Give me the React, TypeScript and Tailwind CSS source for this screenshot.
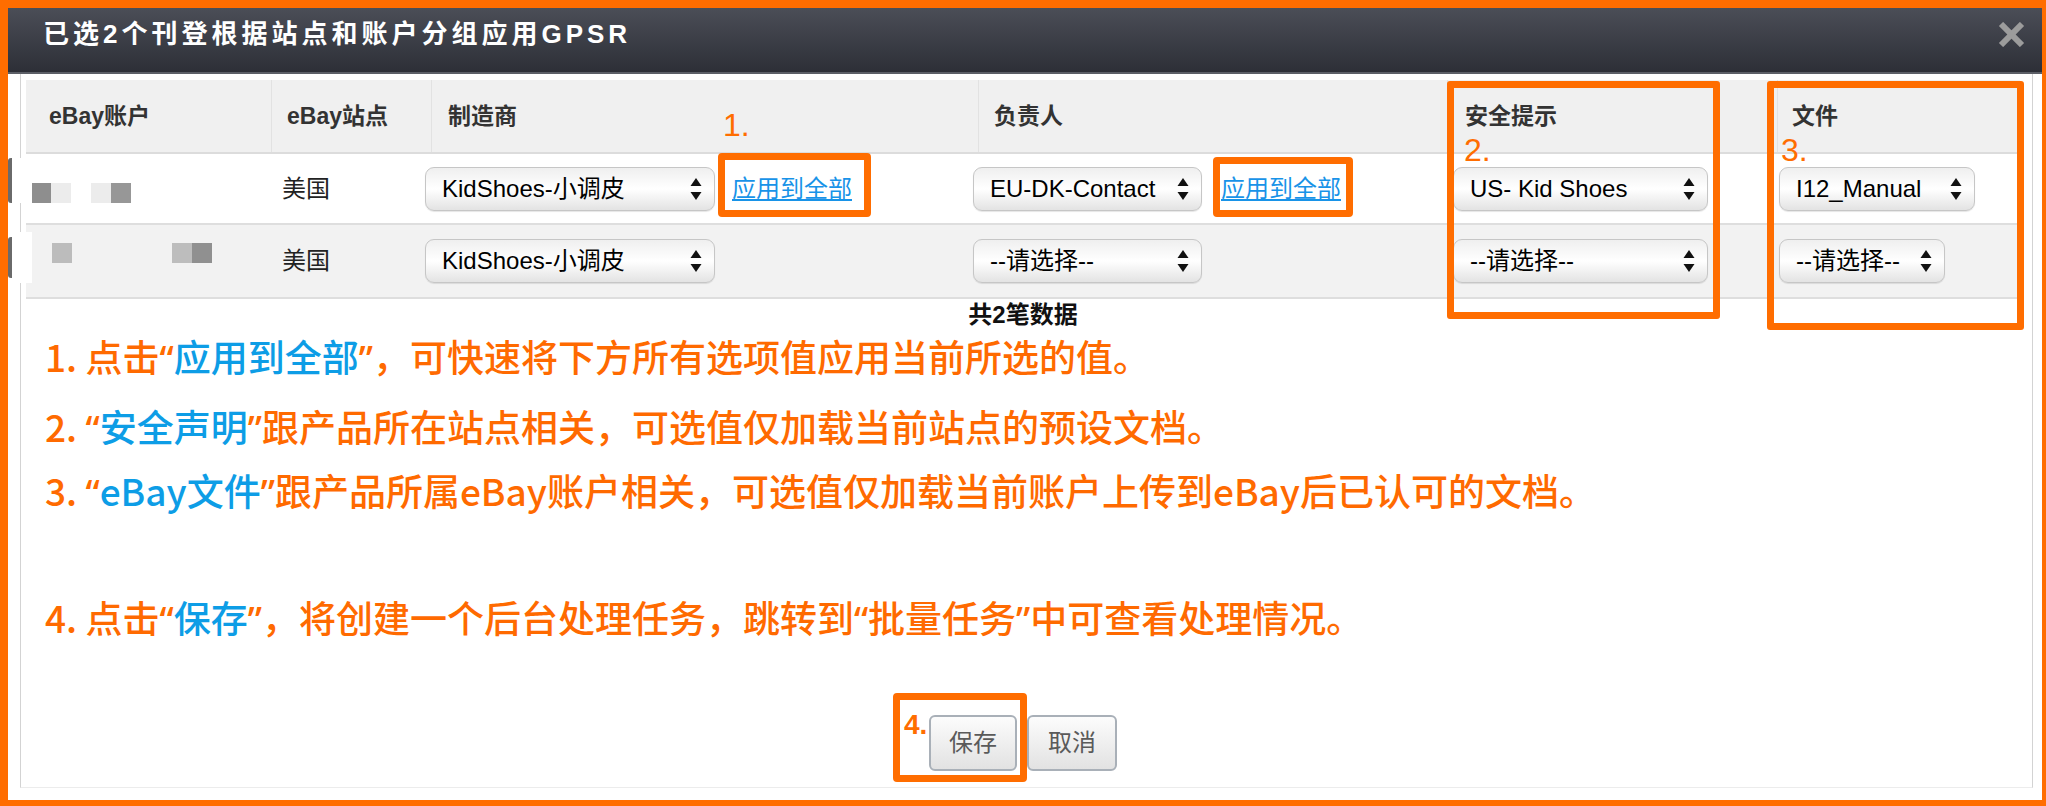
import React from "react";

const ui = "font-['Liberation_Sans','Noto_Sans_CJK_SC',sans-serif]";
const note = "font-['Noto_Sans_CJK_SC',sans-serif]";

function Arrows() {
  return (
    <svg width="12" height="22" viewBox="0 0 12 22" className="shrink-0">
      <path d="M6 0 L11.5 8 L0.5 8 Z" fill="#111" />
      <path d="M0.5 14 L11.5 14 L6 22 Z" fill="#111" />
    </svg>
  );
}

function Select({ value, className }: { value: string; className: string }) {
  return (
    <div
      className={`flex h-[44px] shrink-0 items-center justify-between rounded-[9px] border border-[#c6c6c6] bg-linear-to-b from-[#efefef] via-white to-[#e3e3e3] pl-[16px] pr-[12px] text-[24px] leading-none text-black shadow-[0_1px_1px_rgba(0,0,0,0.1)] ${className}`}
    >
      <span className="whitespace-nowrap">{value}</span>
      <Arrows />
    </div>
  );
}

function ApplyAll({ className }: { className: string }) {
  return (
    <a className={`whitespace-nowrap text-[24px] leading-[24px] text-[#1893e8] underline underline-offset-2 ${className}`}>
      应用到全部
    </a>
  );
}

// narrow latin quotes, as in the reference
function Q({ children }: { children: React.ReactNode }) {
  return <span className="font-['Noto_Sans',sans-serif]">{children}</span>;
}

function Blue({ children }: { children: React.ReactNode }) {
  return <span className="text-[#0d9de6]">{children}</span>;
}

const headCols = "grid grid-cols-[245px_160px_547px_469px_330px_243px]";
const rowCols = "grid grid-cols-[244px_145px_548px_477px_327px_253px]";

export default function App() {
  return (
    <div className={`h-[806px] w-[2046px] bg-[#ff6d00] pb-[6px] pl-[8px] pr-[4px] pt-[8px] ${ui}`}>
      <div className="relative flex h-full flex-col bg-white">
        {/* title bar */}
        <div className="flex h-[64px] items-start justify-between bg-linear-to-b from-[#4b4e57] to-[#2d2f37] pl-[35px] pr-[17px] pt-[13px]">
          <h1 className="text-[26px] font-bold leading-[26px] tracking-[4px] text-white">
            已选2个刊登根据站点和账户分组应用GPSR
          </h1>
          <svg width="27" height="25" viewBox="0 0 27 25" className="mt-[1px]">
            <path d="M3 2 L24 23 M24 2 L3 23" stroke="#9c9c9c" strokeWidth="6" />
          </svg>
        </div>
        <div className="h-[2px] bg-[#5c5f67]" />

        {/* body */}
        <div className="mb-[12px] ml-[12px] mr-[9px] flex flex-1 flex-col border-x border-b border-x-[#d3d3d3] border-b-[#ececec] pb-[16px] pl-[5px] pr-[12px] pt-[6px]">
          {/* header */}
          <div className={`${headCols} h-[74px] border-b-2 border-[#dcdcdc] bg-[#f0f0f0] text-[23px] font-bold text-[#333]`}>
            <div className="flex items-center pl-[23px]">eBay账户</div>
            <div className="flex items-center border-l border-[#e2e2e2] pl-[15px]">eBay站点</div>
            <div className="flex items-center border-l border-[#e2e2e2] pl-[16px]">制造商</div>
            <div className="flex items-center border-l border-[#e2e2e2] pl-[15px]">负责人</div>
            <div className="flex items-center border-l border-[#e2e2e2] pl-[17px]">安全提示</div>
            <div className="flex items-center border-l border-[#e2e2e2] pl-[14px]">文件</div>
          </div>

          {/* row 1 */}
          <div className={`${rowCols} h-[71px] items-center border-b-2 border-[#dedede] bg-white text-[24px] text-[#222]`}>
            <div className="mt-[9px] flex pl-[5px]">
              <div className="h-[20px] w-[20px] bg-[#8e8e8e]" />
              <div className="h-[20px] w-[20px] bg-[#ececec]" />
              <div className="ml-[20px] h-[20px] w-[20px] bg-[#ececec]" />
              <div className="h-[20px] w-[20px] bg-[#979797]" />
            </div>
            <div className="pl-[12px]">美国</div>
            <div className="flex items-center pl-[10px]">
              <Select value="KidShoes-小调皮" className="w-[290px]" />
              <ApplyAll className="ml-[17px]" />
            </div>
            <div className="flex items-center pl-[10px]">
              <Select value="EU-DK-Contact" className="w-[229px]" />
              <ApplyAll className="ml-[19px]" />
            </div>
            <div className="pl-[13px]">
              <Select value="US- Kid Shoes" className="w-[255px]" />
            </div>
            <div className="pl-[12px]">
              <Select value="I12_Manual" className="w-[196px]" />
            </div>
          </div>

          {/* row 2 */}
          <div className={`${rowCols} h-[74px] items-center border-b-2 border-[#dedede] bg-[#f2f2f2] text-[24px] text-[#222]`}>
            <div className="mb-[16px] flex pl-[26px]">
              <div className="h-[20px] w-[20px] bg-[#bcbcbc]" />
              <div className="ml-[100px] h-[20px] w-[20px] bg-[#bdbdbd]" />
              <div className="h-[20px] w-[20px] bg-[#909090]" />
            </div>
            <div className="pl-[12px]">美国</div>
            <div className="pl-[10px]">
              <Select value="KidShoes-小调皮" className="w-[290px]" />
            </div>
            <div className="pl-[10px]">
              <Select value="--请选择--" className="w-[229px]" />
            </div>
            <div className="pl-[13px]">
              <Select value="--请选择--" className="w-[255px]" />
            </div>
            <div className="pl-[12px]">
              <Select value="--请选择--" className="w-[166px]" />
            </div>
          </div>

          <div className="h-[32px] text-center text-[24px] font-bold leading-[32px] text-[#111]">共2笔数据</div>

          {/* notes */}
          <div className={`-mt-[6px] pl-[19px] text-[37px] font-medium leading-[63px] text-[#ff6a00] ${note}`}>
            <p>
              1. 点击<Q>“</Q><Blue>应用到全部</Blue><Q>”</Q>，可快速将下方所有选项值应用当前所选的值。
            </p>
            <p className="mt-[6px]">
              2. <Q>“</Q><Blue>安全声明</Blue><Q>”</Q>跟产品所在站点相关，可选值仅加载当前站点的预设文档。
            </p>
            <p>
              3. <Q>“</Q><Blue>eBay文件</Blue><Q>”</Q>跟产品所属eBay账户相关，可选值仅加载当前账户上传到eBay后已认可的文档。
            </p>
            <p className="mt-[63px]">
              4. 点击<Q>“</Q><Blue>保存</Blue><Q>”</Q>，将创建一个后台处理任务，跳转到<Q>“</Q>批量任务<Q>”</Q>中可查看处理情况。
            </p>
          </div>

          {/* buttons */}
          <div className="mt-auto flex justify-center gap-[10px]">
            <button className="h-[56px] w-[88px] rounded-[6px] border-2 border-[#a9b0b8] bg-linear-to-b from-[#fcfcfc] to-[#e2e2e2] text-[24px] text-[#5a5a5a]">
              保存
            </button>
            <button className="h-[56px] w-[90px] rounded-[6px] border-2 border-[#a9b0b8] bg-linear-to-b from-[#fcfcfc] to-[#e2e2e2] text-[24px] text-[#5a5a5a]">
              取消
            </button>
          </div>
        </div>

        {/* stray marks at the left edge */}
        <div className="absolute left-[4px] top-[150px] h-[45px] w-[20px] bg-white" />
        <div className="absolute left-0 top-[150px] h-[45px] w-[4px] rounded-l-[3px] bg-[#6a6a6a]" />
        <div className="absolute left-[4px] top-[224px] h-[51px] w-[20px] bg-white" />
        <div className="absolute left-0 top-[229px] h-[41px] w-[4px] rounded-l-[3px] bg-[#6a6a6a]" />

        {/* orange annotations */}
        <div className="absolute left-[710px] top-[145px] h-[64px] w-[153px] rounded-[4px] border-[7px] border-[#ff6d00]" />
        <div className="absolute left-[1205px] top-[149px] h-[60px] w-[140px] rounded-[4px] border-[7px] border-[#ff6d00]" />
        <div className="absolute left-[1439px] top-[73px] h-[238px] w-[273px] rounded-[3px] border-[7px] border-[#ff6d00]" />
        <div className="absolute left-[1759px] top-[73px] h-[249px] w-[257px] rounded-[3px] border-[7px] border-[#ff6d00]" />
        <div className="absolute left-[885px] top-[685px] h-[89px] w-[134px] rounded-[4px] border-[7px] border-[#ff6d00]" />
        <span className="absolute left-[715px] top-[101px] text-[32px] leading-none text-[#ff6d00]">1.</span>
        <span className="absolute left-[1456px] top-[126px] text-[32px] leading-none text-[#ff6d00]">2.</span>
        <span className="absolute left-[1773px] top-[126px] text-[32px] leading-none text-[#ff6d00]">3.</span>
        <span className="absolute left-[896px] top-[703px] text-[28px] font-bold leading-none text-[#ff6d00]">4.</span>
      </div>
    </div>
  );
}
